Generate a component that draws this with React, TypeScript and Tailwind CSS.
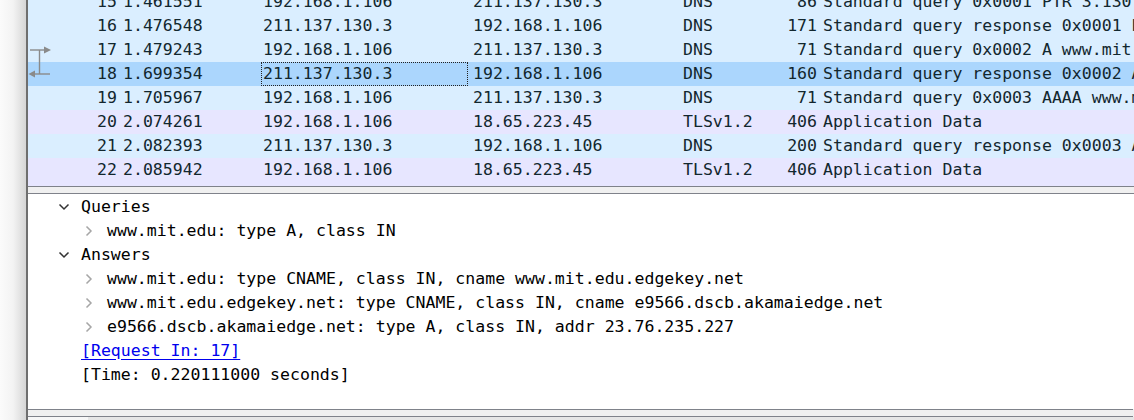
import React from 'react';

type Packet = {
  no: number;
  time: string;
  src: string;
  dst: string;
  proto: string;
  len: number;
  info: string;
};

const packets: Packet[] = [
  { no: 15, time: '1.461551', src: '192.168.1.106', dst: '211.137.130.3', proto: 'DNS', len: 86, info: 'Standard query 0x0001 PTR 3.130.137.211.in-addr.arpa' },
  { no: 16, time: '1.476548', src: '211.137.130.3', dst: '192.168.1.106', proto: 'DNS', len: 171, info: 'Standard query response 0x0001 PTR 3.130.137.211.in-addr.arpa' },
  { no: 17, time: '1.479243', src: '192.168.1.106', dst: '211.137.130.3', proto: 'DNS', len: 71, info: 'Standard query 0x0002 A www.mit.edu' },
  { no: 18, time: '1.699354', src: '211.137.130.3', dst: '192.168.1.106', proto: 'DNS', len: 160, info: 'Standard query response 0x0002 A www.mit.edu CNAME www.mit.edu.edgekey.net' },
  { no: 19, time: '1.705967', src: '192.168.1.106', dst: '211.137.130.3', proto: 'DNS', len: 71, info: 'Standard query 0x0003 AAAA www.mit.edu' },
  { no: 20, time: '2.074261', src: '192.168.1.106', dst: '18.65.223.45', proto: 'TLSv1.2', len: 406, info: 'Application Data' },
  { no: 21, time: '2.082393', src: '211.137.130.3', dst: '192.168.1.106', proto: 'DNS', len: 200, info: 'Standard query response 0x0003 AAAA www.mit.edu' },
  { no: 22, time: '2.085942', src: '192.168.1.106', dst: '18.65.223.45', proto: 'TLSv1.2', len: 406, info: 'Application Data' },
];

const SELECTED = 18;

// related-packet markers in the leftmost part of the No. column
function RelatedMark({ no }: { no: number }) {
  if (no === 17) {
    return (
      <svg width="24" height="24" className="absolute left-0 top-0" viewBox="0 0 24 24">
        <line x1="2" y1="12" x2="18" y2="12" stroke="#8a8a8a" strokeWidth="1.4" />
        <polygon points="16,8.5 23,12 16,15.5" fill="#8a8a8a" />
        <line x1="11.5" y1="12" x2="11.5" y2="24" stroke="#8a8a8a" strokeWidth="1.4" />
      </svg>
    );
  }
  if (no === 18) {
    return (
      <svg width="24" height="24" className="absolute left-0 top-0" viewBox="0 0 24 24">
        <line x1="11.5" y1="0" x2="11.5" y2="12" stroke="#8a8a8a" strokeWidth="1.4" />
        <line x1="5" y1="12" x2="22" y2="12" stroke="#8a8a8a" strokeWidth="1.4" />
        <polygon points="7,8.5 0.5,12 7,15.5" fill="#8a8a8a" />
      </svg>
    );
  }
  return null;
}

function PacketRow({ p }: { p: Packet }) {
  const selected = p.no === SELECTED;
  const bg = selected ? 'bg-[#abd6fd]' : p.proto === 'DNS' ? 'bg-[#daeeff]' : 'bg-[#e7e6ff]';
  return (
    <div className={`flex h-[24px] items-center whitespace-nowrap ${bg}`}>
      <div className="relative w-[89px] shrink-0 text-right h-full leading-[24px]">
        <RelatedMark no={p.no} />
        {p.no}
      </div>
      <div className="w-[144px] shrink-0 pl-[6px]">{p.time}</div>
      <div
        className={`w-[207px] shrink-0 h-full leading-[22px] pl-[1px] border ${
          selected ? 'border-dotted border-[#222]' : 'border-transparent'
        }`}
      >
        {p.src}
      </div>
      <div className="w-[210px] shrink-0 pl-[5px]">{p.dst}</div>
      <div className="w-[100px] shrink-0 pl-[5px]">{p.proto}</div>
      <div className="w-[39px] shrink-0 text-right">{p.len}</div>
      <div className="pl-[6px]">{p.info}</div>
    </div>
  );
}

function ChevronDown() {
  return (
    <svg width="12" height="8" viewBox="0 0 12 8" className="shrink-0">
      <polyline points="1.5,1.5 6,6 10.5,1.5" fill="none" stroke="#333" strokeWidth="1.5" />
    </svg>
  );
}

function ChevronRight() {
  return (
    <svg width="8" height="12" viewBox="0 0 8 12" className="shrink-0">
      <polyline points="1.5,1.5 6,6 1.5,10.5" fill="none" stroke="#a6a6a6" strokeWidth="1.5" />
    </svg>
  );
}

function TreeLine({ level, open, leaf, children }: { level: 1 | 2; open?: boolean; leaf?: boolean; children: React.ReactNode }) {
  return (
    <div className="flex h-[24px] items-center whitespace-nowrap">
      {level === 1 ? (
        <div className="w-[53px] shrink-0 flex justify-end pr-[11px]">{!leaf && (open ? <ChevronDown /> : <ChevronRight />)}</div>
      ) : (
        <div className="w-[79px] shrink-0 flex justify-end pr-[14px]">{!leaf && <ChevronRight />}</div>
      )}
      <div>{children}</div>
    </div>
  );
}

export default function App() {
  return (
    <div
      className="w-[1134px] h-[420px] overflow-hidden flex bg-[#f0f0f0] text-[16.55px]"
      style={{ fontFamily: '"DejaVu Sans Mono", "Liberation Mono", monospace' }}
    >
      {/* left gutter with soft shadow */}
      <div className="w-[28px] shrink-0 h-full bg-gradient-to-r from-[#fbfbfb] via-[#f3f3f3] to-[#d6d6d6] border-r-2 border-[#6f6f6f]" />

      <div className="flex-1 flex flex-col min-w-0">
        {/* packet list */}
        <div className="h-[186px] shrink-0 overflow-hidden text-[#12272e] bg-[#e7e6ff]">
          <div className="-mt-[10px]">
            {packets.map((p) => (
              <PacketRow key={p.no} p={p} />
            ))}
          </div>
        </div>

        {/* splitter */}
        <div className="h-[8px] shrink-0 border-y border-[#7f828a] bg-[#f0f0f0]" />

        {/* packet details */}
        <div className="h-[215px] shrink-0 bg-white text-black overflow-hidden pt-[1px]">
          <TreeLine level={1} open>Queries</TreeLine>
          <TreeLine level={2}>www.mit.edu: type A, class IN</TreeLine>
          <TreeLine level={1} open>Answers</TreeLine>
          <TreeLine level={2}>www.mit.edu: type CNAME, class IN, cname www.mit.edu.edgekey.net</TreeLine>
          <TreeLine level={2}>www.mit.edu.edgekey.net: type CNAME, class IN, cname e9566.dscb.akamaiedge.net</TreeLine>
          <TreeLine level={2}>e9566.dscb.akamaiedge.net: type A, class IN, addr 23.76.235.227</TreeLine>
          <TreeLine level={1} leaf>
            <span className="text-[#0000ee] underline underline-offset-[3px]">[Request In: 17]</span>
          </TreeLine>
          <TreeLine level={1} leaf>[Time: 0.220111000 seconds]</TreeLine>
        </div>

        {/* lower splitter + bytes pane tab */}
        <div className="h-[8px] shrink-0 border-y border-[#7f828a] bg-[#f0f0f0] mr-[1px]" />
        <div className="flex-1 bg-[#e6e6e6] flex">
          <div className="w-[60px] bg-[#f7f7f7]" />
        </div>
      </div>
    </div>
  );
}
